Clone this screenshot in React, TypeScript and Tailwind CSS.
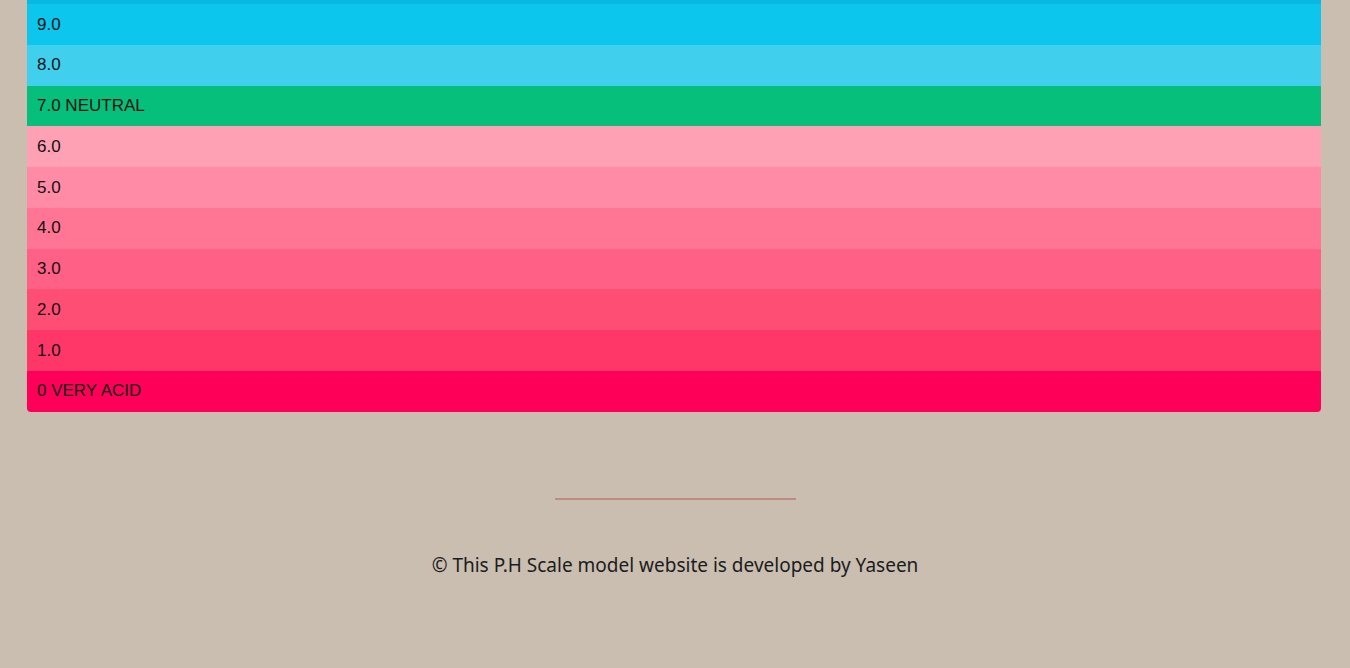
import React from 'react';

// pH scale rows, shown as they appear when the page is scrolled to the bottom
const rows = [
  { label: '9.0', color: 'bg-[#0cc6ee]' },
  { label: '8.0', color: 'bg-[#40cfec]' },
  { label: '7.0 NEUTRAL', color: 'bg-[#05bf7b]' },
  { label: '6.0', color: 'bg-[#ffa1b5]' },
  { label: '5.0', color: 'bg-[#ff8ba6]' },
  { label: '4.0', color: 'bg-[#ff7593]' },
  { label: '3.0', color: 'bg-[#ff6085]' },
  { label: '2.0', color: 'bg-[#ff4e74]' },
  { label: '1.0', color: 'bg-[#ff3768]' },
  { label: '0 VERY ACID', color: 'bg-[#ff0059]' },
];

export default function App() {
  return (
    <div className="min-h-screen bg-[#c9beb0] h-[668px] overflow-hidden">
      <div className="mx-[27px] w-[1294px] rounded-b-[4px] overflow-hidden">
        {/* cut-off 10.0 row */}
        <div className="h-[4px] bg-[#0ab9e2]" />
        {rows.map((r) => (
          <div
            key={r.label}
            className={`${r.color} h-[40.75px] flex items-center pl-[10px] text-[17px] text-[#111] font-['Liberation_Sans',Arial,sans-serif]`}
          >
            {r.label}
          </div>
        ))}
      </div>

      <div className="flex flex-col items-center">
        <div className="mt-[86px] w-[241px] h-[2px] bg-[#bb8b84]" />
        <p className="mt-[51px] text-[19px] text-[#1c1c1c] font-['Noto_Sans',sans-serif]">
          © This P.H Scale model website is developed by Yaseen
        </p>
      </div>
    </div>
  );
}
